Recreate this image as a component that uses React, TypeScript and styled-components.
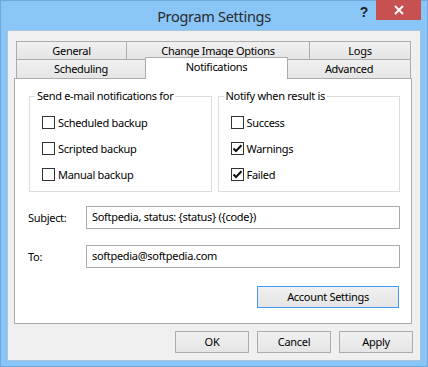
import { ReactNode } from 'react';
import styled, { createGlobalStyle } from 'styled-components';

const GlobalStyle = createGlobalStyle`
  html, body {
    margin: 0;
    padding: 0;
    background: #88c4f5;
  }
  body {
    font-family: "Noto Sans", "Open Sans", sans-serif;
    font-size: 11px;
    letter-spacing: -0.3px;
    color: #000;
  }
`;

const Window = styled.div`
  width: 428px;
  height: 367px;
  box-sizing: border-box;
  border: 1px solid #6fa9dc;
  background: #89c5f6;
  display: flex;
  flex-direction: column;
`;

const TitleBar = styled.div`
  height: 29px;
  display: flex;
  align-items: flex-start;
`;

const Title = styled.div`
  flex: 1;
  text-align: center;
  font-size: 14.5px;
  letter-spacing: -0.3px;
  line-height: 30px;
  color: #2b2b2b;
  padding-left: 75px;
`;

const HelpButton = styled.div`
  width: 24px;
  height: 20px;
  font-size: 14px;
  font-weight: 700;
  line-height: 22px;
  text-align: center;
  color: #222;
  letter-spacing: 0;
  font-family: "Liberation Sans", sans-serif;
`;

const CloseButton = styled.div`
  width: 45px;
  height: 20px;
  margin-top: -1px;
  margin-right: 6px;
  background: #c75050;
  display: flex;
  align-items: center;
  justify-content: center;
`;

const Client = styled.div`
  flex: 1;
  margin: 0 6px 6px 6px;
  border: 1px solid #a9c4dc;
  background: #f0f0f0;
  padding: 10px 7px 7px 6px;
  display: flex;
  flex-direction: column;
`;

const TabArea = styled.div`
  width: 398px;
  display: flex;
  flex-direction: column;
`;

const TabRow = styled.div<{ $front?: boolean }>`
  display: flex;
  padding-left: 3px;
  height: ${(p) => (p.$front ? 19 : 18)}px;
`;

const Tab = styled.div<{ $w: number; $selected?: boolean }>`
  width: ${(p) => p.$w}px;
  box-sizing: border-box;
  margin-left: -1px;
  border: 1px solid #acacac;
  border-bottom: none;
  background: ${(p) => (p.$selected ? '#fff' : 'linear-gradient(#f0f0f0, #e5e5e5)')};
  text-align: center;
  line-height: 17px;
  position: relative;
  ${(p) =>
    p.$selected &&
    `
    margin-top: -2px;
    height: 22px;
    z-index: 1;
  `}
`;

const Panel = styled.div`
  width: 398px;
  height: 246px;
  box-sizing: border-box;
  border: 1px solid #acacac;
  background: #fff;
  padding: 10px 11px 0 14px;
  display: flex;
  flex-direction: column;
`;

const Groups = styled.div`
  display: flex;
  gap: 6px;
`;

const GroupBox = styled.fieldset`
  width: 183px;
  height: 103px;
  box-sizing: border-box;
  margin: 0;
  border: 1px solid #dcdcdc;
  padding: 10px 8px 0 12px;
  display: flex;
  flex-direction: column;
  gap: 8px;
`;

const Legend = styled.legend`
  padding: 0 2px;
  margin-left: -7px;
  line-height: 14px;
  color: #000;
`;

const CheckRow = styled.label`
  display: flex;
  align-items: center;
  gap: 3px;
  height: 18px;
`;

const Box = styled.span`
  width: 13px;
  height: 13px;
  box-sizing: border-box;
  border: 1px solid #333;
  background: #fff;
  display: flex;
  align-items: center;
  justify-content: center;
`;

const Field = styled.div<{ $top: number }>`
  display: flex;
  align-items: center;
  margin-top: ${(p) => p.$top}px;
  margin-left: -1px;
`;

const FieldLabel = styled.div`
  width: 58px;
`;

const Input = styled.div`
  flex: 1;
  height: 23px;
  box-sizing: border-box;
  border: 1px solid #acacac;
  padding-left: 5px;
  line-height: 20px;
  background: #fff;
`;

const Button = styled.div<{ $w: number; $focus?: boolean }>`
  width: ${(p) => p.$w}px;
  height: 22px;
  box-sizing: border-box;
  border: 1px solid ${(p) => (p.$focus ? '#3c9af5' : '#acacac')};
  background: linear-gradient(#f0f0f0, #e5e5e5);
  text-align: center;
  line-height: 20px;
`;

const AccountRow = styled.div`
  display: flex;
  justify-content: flex-end;
  margin-top: 18px;
  padding-right: 1px;
`;

const Footer = styled.div`
  display: flex;
  justify-content: flex-end;
  gap: 8px;
  margin-top: 7px;
`;

const Check = ({ checked, children }: { checked?: boolean; children: ReactNode }) => (
  <CheckRow>
    <Box>
      {checked && (
        <svg width="11" height="11" viewBox="0 0 11 11">
          <path d="M1.5 5.5 L4 8 L9.5 2.2" fill="none" stroke="#111" strokeWidth="2" />
        </svg>
      )}
    </Box>
    {children}
  </CheckRow>
);

export default function App() {
  return (
    <>
      <GlobalStyle />
      <Window>
        <TitleBar>
          <Title>Program Settings</Title>
          <HelpButton>?</HelpButton>
          <CloseButton>
            <svg width="10" height="10" viewBox="0 0 10 10">
              <path d="M1 1 L9 9 M9 1 L1 9" stroke="#fff" strokeWidth="2" />
            </svg>
          </CloseButton>
        </TitleBar>
        <Client>
          <TabArea>
            <TabRow>
              <Tab $w={111}>General</Tab>
              <Tab $w={184}>Change Image Options</Tab>
              <Tab $w={102}>Logs</Tab>
            </TabRow>
            <TabRow $front>
              <Tab $w={130}>Scheduling</Tab>
              <Tab $w={143} $selected>Notifications</Tab>
              <Tab $w={124}>Advanced</Tab>
            </TabRow>
          </TabArea>
          <Panel>
            <Groups>
              <GroupBox>
                <Legend>Send e-mail notifications for</Legend>
                <Check>Scheduled backup</Check>
                <Check>Scripted backup</Check>
                <Check>Manual backup</Check>
              </GroupBox>
              <GroupBox>
                <Legend>Notify when result is</Legend>
                <Check>Success</Check>
                <Check checked>Warnings</Check>
                <Check checked>Failed</Check>
              </GroupBox>
            </Groups>
            <Field $top={14}>
              <FieldLabel>Subject:</FieldLabel>
              <Input>Softpedia, status: {'{status}'} ({'{code}'})</Input>
            </Field>
            <Field $top={16}>
              <FieldLabel>To:</FieldLabel>
              <Input>softpedia@softpedia.com</Input>
            </Field>
            <AccountRow>
              <Button $w={142} $focus>Account Settings</Button>
            </AccountRow>
          </Panel>
          <Footer>
            <Button $w={74}>OK</Button>
            <Button $w={74}>Cancel</Button>
            <Button $w={74}>Apply</Button>
          </Footer>
        </Client>
      </Window>
    </>
  );
}
